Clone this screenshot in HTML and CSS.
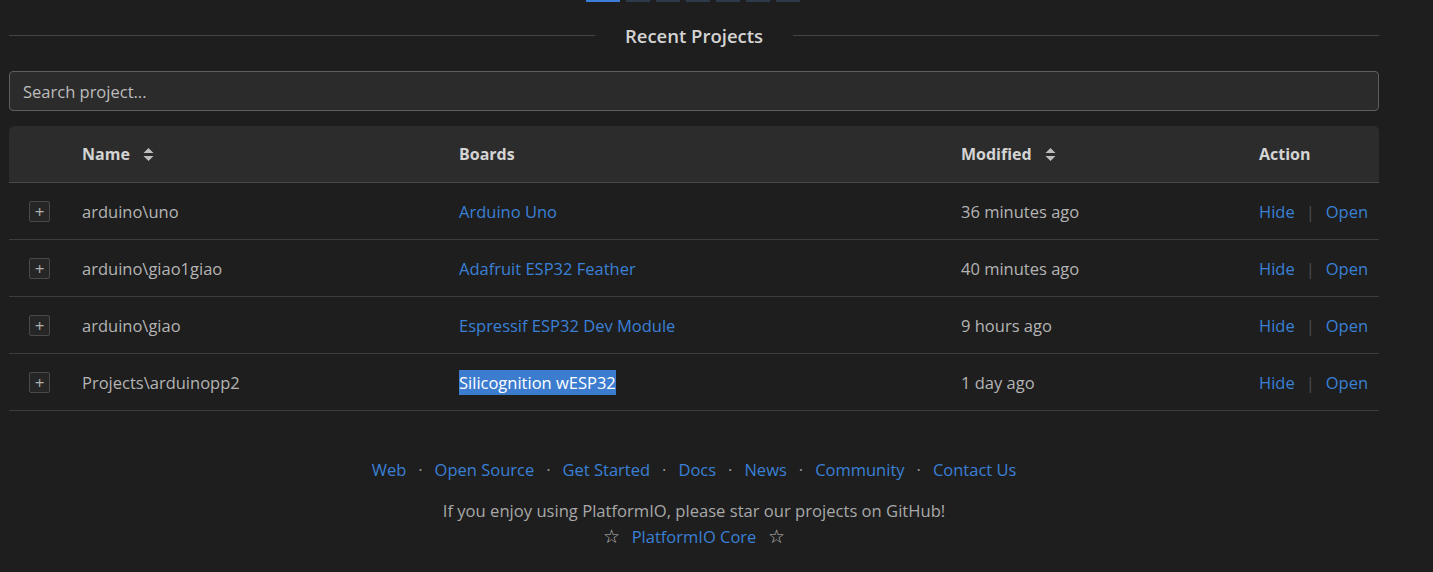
FILE: index.html
```html
<!DOCTYPE html>
<html>
<head>
<meta charset="utf-8">
<link rel="stylesheet" href="styles.css">
</head>
<body>
<div class="page">
  <div class="dots">
    <span class="dot active"></span><span class="dot"></span><span class="dot"></span><span class="dot"></span><span class="dot"></span><span class="dot"></span><span class="dot"></span>
  </div>
  <div class="divider"><span class="line"></span><h2 class="title">Recent Projects</h2><span class="line"></span></div>
  <div class="search"><input class="search-input" type="text" placeholder="Search project..."></div>
  <table class="projects">
    <colgroup><col class="c1"><col class="c2"><col class="c3"><col class="c4"><col class="c5"></colgroup>
    <thead>
      <tr>
        <th></th>
        <th><span class="th-sort">Name <svg class="sort" width="11" height="15" viewBox="0 0 11 15"><path d="M5.5 1 L10.5 6 L0.5 6 Z M0.5 9 L10.5 9 L5.5 14 Z" fill="#bdbdbd"/></svg></span></th>
        <th>Boards</th>
        <th><span class="th-sort">Modified <svg class="sort" width="11" height="15" viewBox="0 0 11 15"><path d="M5.5 1 L10.5 6 L0.5 6 Z M0.5 9 L10.5 9 L5.5 14 Z" fill="#bdbdbd"/></svg></span></th>
        <th>Action</th>
      </tr>
    </thead>
    <tbody>
      <tr><td class="exp"><span class="plus">+</span></td><td>arduino\uno</td><td><a class="link">Arduino Uno</a></td><td>36 minutes ago</td><td class="act"><a class="link">Hide</a><span class="sep">|</span><a class="link">Open</a></td></tr>
      <tr><td class="exp"><span class="plus">+</span></td><td>arduino\giao1giao</td><td><a class="link">Adafruit ESP32 Feather</a></td><td>40 minutes ago</td><td class="act"><a class="link">Hide</a><span class="sep">|</span><a class="link">Open</a></td></tr>
      <tr><td class="exp"><span class="plus">+</span></td><td>arduino\giao</td><td><a class="link">Espressif ESP32 Dev Module</a></td><td>9 hours ago</td><td class="act"><a class="link">Hide</a><span class="sep">|</span><a class="link">Open</a></td></tr>
      <tr><td class="exp"><span class="plus">+</span></td><td>Projects\arduinopp2</td><td><a class="link selected">Silicognition wESP32</a></td><td>1 day ago</td><td class="act"><a class="link">Hide</a><span class="sep">|</span><a class="link">Open</a></td></tr>
    </tbody>
  </table>
  <footer class="footer">
    <nav class="links">
      <a class="link">Web</a><span class="mid">·</span><a class="link">Open Source</a><span class="mid">·</span><a class="link">Get Started</a><span class="mid">·</span><a class="link">Docs</a><span class="mid">·</span><a class="link">News</a><span class="mid">·</span><a class="link">Community</a><span class="mid">·</span><a class="link">Contact Us</a>
    </nav>
    <p class="enjoy">If you enjoy using PlatformIO, please star our projects on GitHub!</p>
    <p class="star-line"><span class="star">☆</span><a class="link">PlatformIO Core</a><span class="star">☆</span></p>
  </footer>
</div>
</body>
</html>
```
FILE: styles.css
```css
html, body {
  margin: 0;
  padding: 0;
  background: #1e1e1e;
  color: #cccccc;
  font-family: "Open Sans", "Noto Sans", sans-serif;
  font-size: 16.5px;
}
.page {
  width: 1370px;
  margin-left: 9px;
}
.dots {
  display: flex;
  justify-content: center;
  gap: 6px;
  height: 2px;
  padding-right: 2px;
}
.dot {
  width: 24px;
  height: 2px;
  background: #2c3a4c;
}
.dot.active {
  width: 34px;
  background: #3b7dd8;
}
.divider {
  display: flex;
  align-items: center;
  margin-top: 19px;
  height: 28px;
}
.line {
  flex: 1;
  height: 1px;
  background: #444444;
}
.title {
  margin: 0;
  padding: 0 30px;
  font-size: 18.5px;
  font-weight: 600;
  color: #d4d4d4;
}
.search {
  margin-top: 22px;
}
.search-input {
  box-sizing: border-box;
  width: 100%;
  height: 40px;
  background: #2b2b2b;
  border: 1px solid #5f5f5f;
  border-radius: 4px;
  padding: 0 13px;
  font-family: inherit;
  font-size: 16.5px;
  color: #cccccc;
  outline: none;
}
.search-input::placeholder {
  color: #bdbdbd;
}
.projects {
  margin-top: 15px;
  width: 100%;
  border-collapse: collapse;
  table-layout: fixed;
}
.c1 { width: 61px; }
.c2 { width: 377px; }
.c3 { width: 502px; }
.c4 { width: 298px; }
.c5 { width: 132px; }
.projects thead tr {
  background: #2c2c2c;
}
.projects th {
  height: 56px;
  text-align: left;
  padding: 0 12px;
  font-weight: 700;
  font-size: 16px;
  color: #d4d4d4;
  border-bottom: 1px solid #474747;
}
.projects th:first-child { border-top-left-radius: 5px; }
.projects th:last-child { border-top-right-radius: 5px; }
.th-sort {
  display: inline-flex;
  align-items: center;
  gap: 13px;
}
.projects td {
  height: 56px;
  padding: 0 12px;
  color: #b4b4b4;
  border-bottom: 1px solid #3d3d3d;
  white-space: nowrap;
}
.projects td.exp {
  padding: 0;
  text-align: center;
}
.plus {
  display: inline-flex;
  align-items: center;
  justify-content: center;
  box-sizing: border-box;
  width: 21px;
  height: 21px;
  border: 1px solid #4a4a4a;
  border-radius: 2px;
  background: #262626;
  color: #b0b0b0;
  font-size: 17px;
  line-height: 1;
  padding-bottom: 1px;
}
.link {
  color: #3a80d6;
  text-decoration: none;
}
.selected {
  background: #3c7ccf;
  color: #ffffff;
  padding: 1px 0;
}
.sep {
  color: #4d4d4d;
  margin: 0 11px;
}
.footer {
  text-align: center;
  padding-top: 47px;
}
.links {
  font-size: 16.5px;
}
.mid {
  color: #9a9a9a;
  margin: 0 12px;
}
.enjoy {
  margin: 18px 0 0;
  font-size: 16.6px;
  color: #a8a8a8;
}
.star-line {
  margin: 1px 0 0;
  font-size: 16.5px;
}
.star {
  color: #bdbdbd;
  margin: 0 12px;
  font-size: 19px;
}
```
